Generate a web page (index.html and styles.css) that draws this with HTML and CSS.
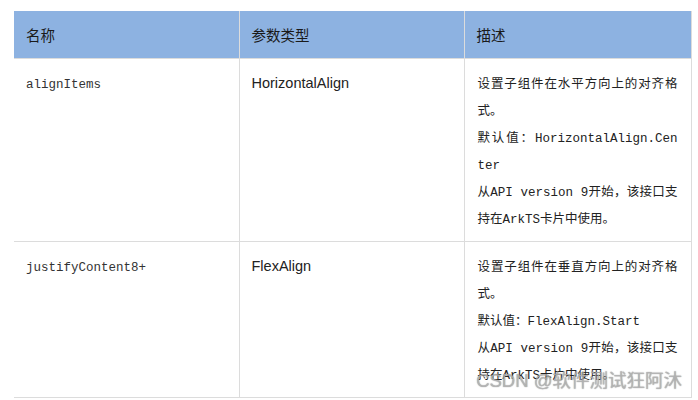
FILE: index.html
```html
<!DOCTYPE html>
<html lang="zh">
<head>
<meta charset="utf-8">
<link rel="stylesheet" href="styles.css">
</head>
<body>
<div class="page">
  <table class="api">
    <colgroup>
      <col class="c1"><col class="c2"><col class="c3">
    </colgroup>
    <thead>
      <tr><th>名称</th><th>参数类型</th><th>描述</th></tr>
    </thead>
    <tbody>
      <tr>
        <td class="code">alignItems</td>
        <td class="type">HorizontalAlign</td>
        <td class="desc">
          <p>设置子组件在水平方向上的对齐格式。</p>
          <p>默认值：HorizontalAlign.Center</p>
          <p>从API version 9开始，该接口支持在ArkTS卡片中使用。</p>
        </td>
      </tr>
      <tr>
        <td class="code">justifyContent8+</td>
        <td class="type">FlexAlign</td>
        <td class="desc">
          <p>设置子组件在垂直方向上的对齐格式。</p>
          <p>默认值：FlexAlign.Start</p>
          <p>从API version 9开始，该接口支持在ArkTS卡片中使用。</p>
        </td>
      </tr>
    </tbody>
  </table>
  <div class="watermark">CSDN @软件测试狂阿沐</div>
</div>
</body>
</html>
```

FILE: styles.css
```css
html, body {
  margin: 0;
  padding: 0;
  background: #ffffff;
}

.page {
  position: relative;
  width: 698px;
  height: 400px;
  padding: 11px 0 0 14px;
  box-sizing: border-box;
  overflow: hidden;
}

.api {
  border-collapse: collapse;
  table-layout: fixed;
  width: 677px;
}

.c1 { width: 225px; }
.c2 { width: 225px; }
.c3 { width: 227px; }

.api th {
  background: #8db2e1;
  color: #1a1a1a;
  font-family: "Noto Sans CJK SC", "Liberation Sans", sans-serif;
  font-weight: normal;
  font-size: 14.5px;
  line-height: 20px;
  text-align: left;
  padding: 14px 12px 13px 12px;
  border-right: 1px solid #dcdcdc;
  border-bottom: 1px solid #dcdcdc;
}

.api td {
  vertical-align: top;
  padding: 13px 12px 7px 12px;
  border-right: 1px solid #dcdcdc;
  border-bottom: 1px solid #dcdcdc;
  color: #222222;
}

.api td.code {
  font-family: "Liberation Mono", "Noto Sans CJK SC", monospace;
  font-size: 12.5px;
  line-height: 27px;
  color: #333333;
}

.api td.type {
  font-family: "Liberation Sans", "Noto Sans CJK SC", sans-serif;
  font-size: 14.5px;
  line-height: 23px;
  color: #222222;
}

.api td.desc {
  font-family: "Liberation Mono", "Noto Sans CJK SC", monospace;
  font-size: 12.5px;
  line-height: 27px;
  padding-left: 13px;
  padding-right: 13px;
  color: #222222;
}

.desc p {
  margin: 0;
  text-align: justify;
  word-break: break-all;
}

.watermark {
  position: absolute;
  right: 16px;
  bottom: 7px;
  font-family: "Liberation Sans", "Noto Sans CJK SC", sans-serif;
  font-size: 18.5px;
  line-height: 24px;
  color: rgba(190, 190, 190, 0.75);
  text-shadow: 0 0 1px rgba(80, 80, 80, 0.7);
  white-space: nowrap;
}
```
